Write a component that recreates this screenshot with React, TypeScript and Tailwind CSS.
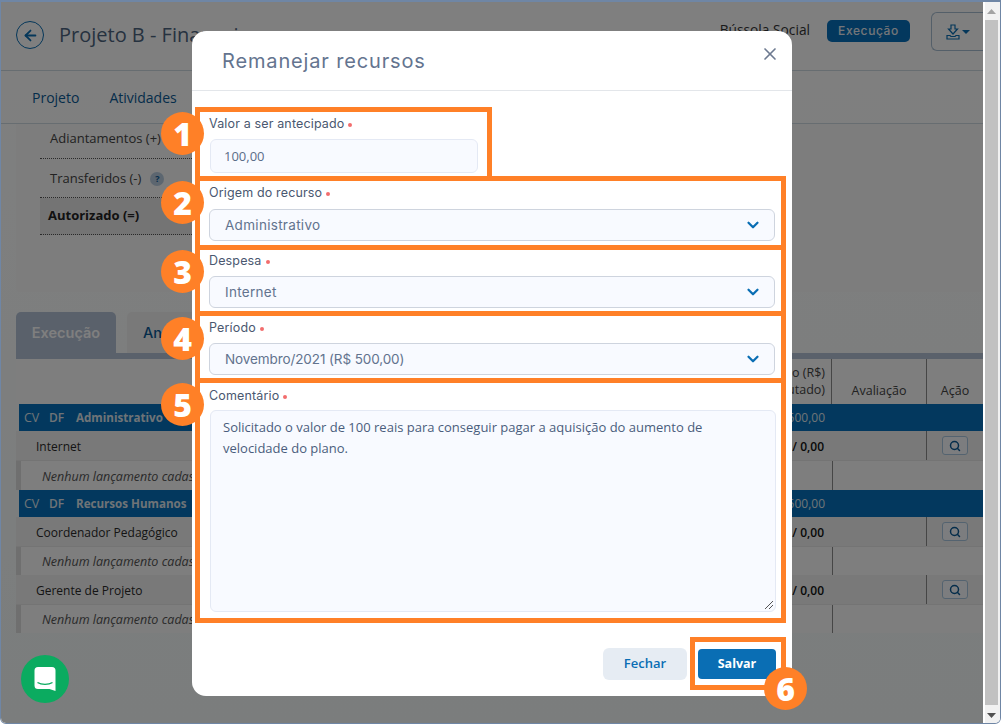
import { ArrowLeft, ChevronDown, Search, X } from "lucide-react";
import type { ReactNode } from "react";

const sans = "font-['Open_Sans',sans-serif]";
const mont = "font-['Inter',sans-serif]";

function Badge({ n, className }: { n: number; className: string }) {
  return (
    <span className={`absolute z-10 flex size-[43px] items-center justify-center rounded-full bg-[#ff8027] text-[32px] leading-none font-extrabold text-white ${sans} ${className}`}>
      {n}
    </span>
  );
}

function Label({ children }: { children: ReactNode }) {
  return (
    <div className={`ml-[9px] flex h-[21px] items-center gap-[4px] text-[12.5px] tracking-[0.15px] text-[#4a5870] ${mont}`}>
      {children}
      <span className="size-[4px] rounded-full bg-[#f26d6d]" />
    </div>
  );
}

function SelectBox({ value, tight }: { value: string; tight?: boolean }) {
  return (
    <div className={`ml-[9px] flex h-[32px] w-[566px] items-center justify-between rounded-[6px] border border-[#ced4de] bg-[#f8faff] pr-[12px] pl-[15px] text-[13.5px] text-[#62738e] ${tight ? "tracking-[-0.1px]" : "tracking-[0.3px]"} ${mont}`}>
      {value}
      <ChevronDown size={18} strokeWidth={3} className="text-[#0a6eb4]" />
    </div>
  );
}

function Modal() {
  return (
    <div className="absolute top-[29px] left-[191px] z-20 flex h-[665px] w-[600px] flex-col rounded-[14px] bg-white">
      <div className="flex h-[60px] shrink-0 items-center justify-between border-b border-[#e3e6ea] pr-[12px] pl-[30px]">
        <span className={`text-[20px] tracking-[0.85px] text-[#64748f] ${mont}`}>Remanejar recursos</span>
        <X size={20} strokeWidth={2} className="-mt-[13px] text-[#6d7a90]" />
      </div>
      <div className="flex flex-1 flex-col pt-[16px] pl-[3px]">
        <div className="relative h-[74px] w-[297px] border-[5px] border-[#ff8027] pt-[2px]">
          <Badge n={1} className="-left-[39px] top-0" />
          <Label>Valor a ser antecipado</Label>
          <div className={`mt-[4px] ml-[10px] flex h-[34px] w-[268px] items-center rounded-[6px] border border-[#e4e9f4] bg-[#f8faff] pt-[2px] pl-[13px] text-[13px] text-[#5b6d88] ${sans}`}>
            100,00
          </div>
        </div>
        <div className="relative -mt-[5px] h-[74px] w-[591px] border-[5px] border-[#ff8027] pt-[2px]">
          <Badge n={2} className="-left-[39px] top-0" />
          <Label>Origem do recurso</Label>
          <div className="mt-[5px]"><SelectBox value="Administrativo" /></div>
        </div>
        <div className="relative -mt-[5px] h-[71px] w-[591px] border-[5px] border-[#ff8027] pt-[1px]">
          <Badge n={3} className="-left-[39px] top-0" />
          <Label>Despesa</Label>
          <div className="mt-[4px]"><SelectBox value="Internet" /></div>
        </div>
        <div className="relative -mt-[5px] h-[72px] w-[591px] border-[5px] border-[#ff8027] pt-[2px]">
          <Badge n={4} className="-left-[39px] top-[1px]" />
          <Label>Período</Label>
          <div className="mt-[4px]"><SelectBox value="Novembro/2021 (R$ 500,00)" tight /></div>
        </div>
        <div className="relative -mt-[5px] h-[245px] w-[591px] border-[5px] border-[#ff8027] pt-[3px]">
          <Badge n={5} className="-left-[39px] top-0" />
          <Label>Comentário</Label>
          <div className={`relative mt-[3px] ml-[10px] h-[202px] w-[566px] rounded-[6px] border border-[#e4e9f4] bg-[#f8faff] px-[12px] py-[6px] text-[13px] leading-[20.5px] text-[#4a5d7c] ${sans}`}>
            Solicitado o valor de 100 reais para conseguir pagar a aquisição do aumento de velocidade do plano.
            <svg className="absolute right-[1px] bottom-[1px]" width="10" height="10" viewBox="0 0 10 10">
              <path d="M1 9 9 1M5 9 9 5" stroke="#555" strokeWidth="1" fill="none" />
            </svg>
          </div>
        </div>
        <div className="mt-[14px] flex items-start justify-end pr-[6px]">
          <button className={`mt-[11px] mr-[3px] h-[32px] w-[84px] rounded-[6px] bg-[#e6ecf3] text-[13px] font-semibold text-[#0a6eb4] ${sans}`}>Fechar</button>
          <div className="relative h-[53px] w-[96px] border-[5px] border-[#ff8027] pt-[7px] pl-[3px]">
            <button className={`h-[30px] w-[78px] rounded-[4px] bg-[#0a6eb4] text-[12.5px] font-bold text-white ${sans}`}>Salvar</button>
            <Badge n={6} className="top-[25px] left-[69px]" />
          </div>
        </div>
      </div>
    </div>
  );
}

function Stat({ label, extra, strong, h }: { label: string; extra?: ReactNode; strong?: boolean; h: string }) {
  return (
    <div className={`flex items-center border-b border-dotted border-[#555] ${h} ${strong ? "bg-[#e9e9e9] pl-[8px] font-bold text-[#222]" : "pl-[10px] text-[#444]"} gap-[9px] text-[13px]`}>
      {label}
      {extra}
    </div>
  );
}

function GroupRow({ name }: { name: string }) {
  return (
    <div className="ml-[3px] flex h-[27px] shrink-0 items-center bg-[#0670bc] pt-[1px] pr-[158px] text-[11.6px] font-bold text-[#dfe7ee]">
      <span className="w-[24px] pl-[5px] text-[12.5px] font-normal">CV</span>
      <span className="ml-[1px] w-[26px] pl-[5px] text-[12px] font-semibold">DF</span>
      <span className="ml-[1px] flex-1 pl-[5px]">{name}</span>
      <span className="text-[12px] font-normal">R$ 500,00</span>
    </div>
  );
}

function ItemRow({ name }: { name: string }) {
  return (
    <div className="flex h-[30px] shrink-0 items-center border-b border-[#e9e9e9] bg-[#f3f3f3] text-[12px] text-[#2a2a2a]">
      <span className="flex-1 pt-[2px] pl-[20px]">{name}</span>
      <span className="mr-[102px] pt-[2px] font-semibold text-[#111]">0,00 / 0,00</span>
      <span className="flex h-full w-[57px] items-center justify-center border-l border-[#8d8d8d]">
        <span className="flex h-[19px] w-[26px] items-center justify-center rounded-[3px] border border-[#a9c7e0] bg-[#f8fbff] text-[#0a5a96]">
          <Search size={12} strokeWidth={3} />
        </span>
      </span>
    </div>
  );
}

function EmptyRow({ h }: { h: string }) {
  return (
    <div className={`flex ${h} shrink-0 items-center border-l-[5px] border-[#dfdfdf] bg-[#fcfcfc] text-[12.5px] text-[#555] italic`}>
      <span className="w-[811px] pt-[3px] pl-[21px]">Nenhum lançamento cadastrado para esta despesa</span>
      <span className="h-full border-l border-[#8d8d8d]" />
    </div>
  );
}

function Page() {
  return (
    <div className={`relative flex h-full w-[983px] flex-col overflow-hidden bg-gradient-to-b from-white to-[#f6fbfb] ${sans}`}>
      <div className="flex h-[69px] shrink-0 items-start border-b border-[#cfdbe3] pt-[19px] pl-[15px]">
        <span className="flex size-[28px] items-center justify-center rounded-full border-[1.5px] border-[#0a6eb4] text-[#0a6eb4]">
          <ArrowLeft size={17} strokeWidth={2.5} />
        </span>
        <span className="ml-[15px] text-[20px] leading-[28px] text-[#4d6480]">Projeto B - Financeiro</span>
        <span className="mt-[-1px] ml-auto text-[13.75px] text-[#333]">Bússola Social</span>
        <span className={`mt-[-1px] ml-[17px] flex h-[22px] w-[83px] items-center justify-center rounded-[5px] bg-[#0670bc] text-[12px] font-medium tracking-[0.6px] text-[#e8edf2] ${mont}`}>Execução</span>
        <span className="mt-[-9px] ml-[21px] flex h-[39px] w-[52px] items-center justify-center gap-[2px] rounded-l-[6px] border border-r-0 border-[#a9bfd2] text-[#0a6eb4]">
          <svg width="14" height="16" viewBox="0 0 14 16" fill="none" stroke="currentColor" strokeWidth="1.2">
            <path d="M5 1h4v4h2.500L7 10 2.500 5H5zM1 11.500V15h12v-3.500H10L9 12.500H5L4 11.500z" />
          </svg>
          <svg width="8" height="4" viewBox="0 0 8 4" fill="currentColor"><path d="M0 0h8L4 4z" /></svg>
        </span>
      </div>
      <div className="flex h-[53px] shrink-0 items-center gap-[30px] border-b border-[#cfdbe3] pl-[31px] text-[14px] text-[#0a5a96]">
        <span>Projeto</span>
        <span>Atividades</span>
      </div>
      <div className="ml-[15px] flex h-[168px] shrink-0 flex-col rounded-b-[4px] bg-[#fafafa] pl-[24px]">
        <div className="w-[152px]">
          <Stat h="h-[35px] pb-[4px]" label="Adiantamentos (+)" />
          <Stat h="h-[39px] pt-[1px]" label="Transferidos (-)" extra={<span className="flex size-[14px] items-center justify-center rounded-full bg-[#b8cde0] text-[9px] font-bold text-[#0a5a96]">?</span>} />
          <Stat h="h-[37px]" label="Autorizado (=)" strong />
        </div>
      </div>
      <div className="mt-[20px] ml-[15px] flex h-[41px] shrink-0 items-start gap-[11px]">
        <span className={`flex h-[41px] w-[100px] items-center justify-center rounded-t-[5px] bg-[#b4c2d6] text-[14.5px] font-semibold text-white ${mont}`}>Execução</span>
        <span className={`flex h-[41px] w-[100px] items-center rounded-t-[5px] bg-[#f3f3f3] pl-[16px] text-[14.5px] font-medium text-[#0a5a96] ${mont}`}>Análise</span>
      </div>
      <div className="ml-[15px] flex h-[6px] shrink-0 bg-[#b4c2d6]" />
      <div className="ml-[15px] flex flex-col">
        <div className="flex h-[45px] shrink-0 bg-[#fdfdfd] text-[12.5px] leading-[17px] text-[#444]">
          <div className="flex-1 pt-[5px] pr-[6px] text-right">Remanejado (R$)<br />(Computado)</div>
          <div className="flex w-[96px] items-end justify-center border-x border-[#8d8d8d] pb-[5px]">Avaliação</div>
          <div className="flex w-[56px] items-end justify-center pb-[5px]">Ação</div>
        </div>
        <GroupRow name="Administrativo" />
        <ItemRow name="Internet" />
        <EmptyRow h="h-[29px]" />
        <GroupRow name="Recursos Humanos" />
        <ItemRow name="Coordenador Pedagógico" />
        <EmptyRow h="h-[28px]" />
        <ItemRow name="Gerente de Projeto" />
        <EmptyRow h="h-[28px]" />
      </div>
      <span className="absolute top-[653px] left-[20px] z-20 flex size-[48px] items-center justify-center rounded-full bg-[#0bab60]">
        <svg width="22" height="26" viewBox="0 0 22 26">
          <path d="M4 1h14a3.500 3.500 0 0 1 3.500 3.500V25l-6-2H4A3.500 3.500 0 0 1 .5 19.500v-15A3.500 3.500 0 0 1 4 1z" fill="#fff" />
          <path d="M3.500 16.500c4 2.500 11 2.500 15 0" stroke="#0bab60" strokeWidth="1.300" fill="none" />
        </svg>
      </span>
      <div className="absolute inset-0 z-10 bg-black/50" />
      <Modal />
    </div>
  );
}

function Scrollbar() {
  return (
    <div className="flex w-[17px] shrink-0 flex-col items-center border-l-2 border-white bg-[#f1f1f1] pr-[2px]">
      <svg className="mt-[7px] shrink-0" width="9" height="5" viewBox="0 0 9 5"><path d="M4.500 0 9 5H0z" fill="#a3a3a3" /></svg>
      <div className="mt-[6px] h-[685px] w-[13px] shrink-0 bg-[#c1c1c1]" />
      <svg className="mt-[8px] shrink-0" width="9" height="5" viewBox="0 0 9 5"><path d="M4.500 5 9 0H0z" fill="#505050" /></svg>
    </div>
  );
}

export default function App() {
  return (
    <div className="flex h-[724px] w-[1001px] overflow-hidden rounded-b-[6px] border-x border-b border-t-2 border-[#6f86a5] bg-white">
      <Page />
      <Scrollbar />
    </div>
  );
}
